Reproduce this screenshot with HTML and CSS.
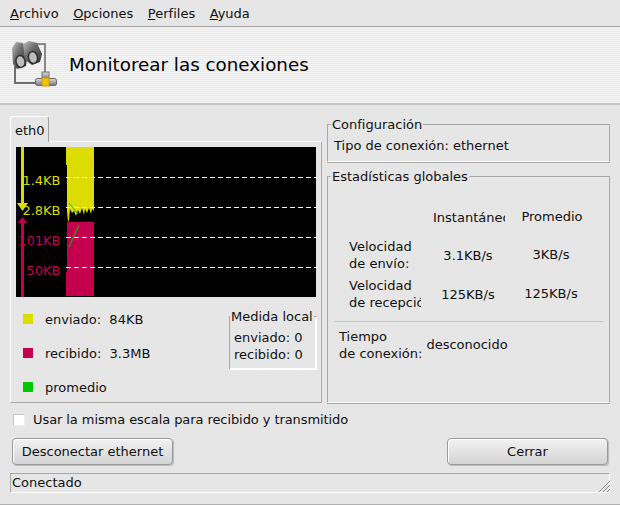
FILE: index.html
```html
<!DOCTYPE html>
<html lang="es">
<head>
<meta charset="utf-8">
<title>Monitorear las conexiones</title>
<link rel="stylesheet" href="styles.css">
</head>
<body>
<div class="window">
  <nav class="menubar">
    <span class="menu"><u>A</u>rchivo</span>
    <span class="menu"><u>O</u>pciones</span>
    <span class="menu"><u>P</u>erfiles</span>
    <span class="menu"><u>A</u>yuda</span>
  </nav>
  <header class="banner">
    <svg class="banner-icon" width="48" height="48" viewBox="0 0 48 48">
      <defs>
        <linearGradient id="barrel" x1="0" y1="0" x2="1" y2="1">
          <stop offset="0" stop-color="#c4c4c4"/><stop offset="0.4" stop-color="#6e6e6e"/><stop offset="1" stop-color="#2e2e2e"/>
        </linearGradient>
        <linearGradient id="pipe" x1="0" y1="0" x2="0" y2="1">
          <stop offset="0" stop-color="#ddd"/><stop offset="1" stop-color="#777"/>
        </linearGradient>
      </defs>
      <path d="M24 4H35V33" fill="none" stroke="#8a8a8a" stroke-width="2"/>
      <path d="M5 26V43H26" fill="none" stroke="#6e6e6e" stroke-width="2"/>
      <rect x="32" y="32" width="7" height="7" fill="url(#pipe)" stroke="#777" stroke-width="1"/>
      <rect x="25.500" y="38.500" width="21" height="7" rx="2" fill="url(#pipe)" stroke="#666" stroke-width="1"/>
      <rect x="32" y="38" width="7" height="8" fill="#f5c400" stroke="#c89a00" stroke-width="1"/>
      <path d="M2 8 6 2 13 3 17 18 16 26 7 29 3 24Z" fill="url(#barrel)"/>
      <path d="M13 4 19 1 27 3 32 14 30 22 22 25 15 20Z" fill="url(#barrel)"/>
      <ellipse cx="10.500" cy="21.500" rx="4.500" ry="6" fill="#bdbdbd" stroke="#2e2e2e" stroke-width="1.500" transform="rotate(-12 10.500 21.500)"/>
      <ellipse cx="23" cy="17.500" rx="4.500" ry="6" fill="#bdbdbd" stroke="#2e2e2e" stroke-width="1.500" transform="rotate(-12 23 17.500)"/>
    </svg>
    <h1 class="banner-title">Monitorear las conexiones</h1>
  </header>
  <main class="content">
    <section class="left">
      <div class="tab">eth0</div>
      <div class="panel">
        <svg class="graph" width="300" height="150" viewBox="0 0 300 150">
          <rect width="300" height="150" fill="#000"/>
          <path d="M50 0H78V18H78V64L76 62 75 67 73 61 71 66 69 62 68 68 66 61 64 67 62 63 60 69 58 64 56 66 54 62 53 73 52 75 51 64V18H50Z" fill="#dcdc00"/>
          <path d="M51 75H78V149H50V125H51Z" fill="#c4004e"/>
          <path d="M53 56 62 67M53 100 63 78" stroke="#00c800" stroke-width="1" fill="none"/>
          <g stroke="#fff" stroke-width="1" stroke-dasharray="5 3">
            <path d="M50 30.500H300"/><path d="M50 60.500H300"/><path d="M50 90.500H300"/><path d="M50 120.500H300"/>
          </g>
          <path d="M6.500 0V58" stroke="#dcdc00" stroke-width="3"/>
          <path d="M1 56H12L6.500 64Z" fill="#dcdc00"/>
          <path d="M6.500 74V150" stroke="#c4004e" stroke-width="3"/>
          <path d="M2 76H11L6.500 70Z" fill="#c4004e"/>
          <g class="graph-label">
            <text x="44.500" y="38" fill="#dcdc00" text-anchor="end">1.4KB</text>
            <text x="44.500" y="68" fill="#dcdc00" text-anchor="end">2.8KB</text>
            <text x="44.500" y="98" fill="#c4004e" text-anchor="end">101KB</text>
            <text x="44.500" y="128" fill="#c4004e" text-anchor="end">50KB</text>
          </g>
        </svg>
        <div class="under-graph">
          <div class="legend">
            <div class="legend-row"><i class="swatch sent"></i><span>enviado:&nbsp; 84KB</span></div>
            <div class="legend-row"><i class="swatch recv"></i><span>recibido:&nbsp; 3.3MB</span></div>
            <div class="legend-row"><i class="swatch avg"></i><span>promedio</span></div>
          </div>
          <fieldset class="box local">
            <legend>Medida local</legend>
            <div>enviado: 0</div>
            <div>recibido: 0</div>
          </fieldset>
        </div>
      </div>
    </section>
    <section class="right">
      <fieldset class="box config">
        <legend>Configuración</legend>
        <div>Tipo de conexión: ethernet</div>
      </fieldset>
      <fieldset class="box stats">
        <legend>Estadísticas globales</legend>
        <div class="stats-grid">
          <span></span>
          <span class="head clip">Instantáneo</span>
          <span class="head alt">Promedio</span>
          <span class="label">Velocidad<br>de envío:</span>
          <span class="val first">3.1KB/s</span>
          <span class="val alt">3KB/s</span>
          <span class="label">Velocidad<br>de recepción:</span>
          <span class="val first">125KB/s</span>
          <span class="val alt">125KB/s</span>
        </div>
        <hr class="sep">
        <div class="uptime">
          <span>Tiempo<br>de conexión:</span>
          <span>desconocido</span>
        </div>
      </fieldset>
    </section>
  </main>
  <label class="check"><span class="checkbox"></span>Usar la misma escala para recibido y transmitido</label>
  <div class="buttons">
    <button class="btn" type="button">Desconectar ethernet</button>
    <button class="btn" type="button">Cerrar</button>
  </div>
  <footer class="status">
    <span class="status-text">Conectado</span>
    <svg class="grip" width="12" height="12" viewBox="0 0 12 12"><path d="M1 12 12 1M5 12 12 5M9 12 12 9" stroke="#8c8c8c" fill="none"/></svg>
  </footer>
</div>
</body>
</html>
```
FILE: styles.css
```css
* { box-sizing: border-box; }
html, body { margin: 0; padding: 0; }
body { font-family: "DejaVu Sans", sans-serif; font-size: 13px; line-height: 17px; color: #111; background: #e6e6e6; }
.window { width: 620px; height: 505px; overflow: hidden; display: flex; flex-direction: column; border-bottom: 1px solid #b0b0b0; padding-bottom: 1px; }
.menubar { height: 27px; display: flex; align-items: center; gap: 14.5px; padding: 1px 10px 0; border-bottom: 1px solid #a8a8a8; }
.banner { height: 78px; display: flex; align-items: center; gap: 11px; padding: 0 0 0 10px; border-bottom: 2px solid #c4c4c4;
  background: repeating-linear-gradient(180deg, #e9e9e9 0, #e9e9e9 1px, #f6f6f6 1px, #f6f6f6 2px); }
.banner-icon { display: block; margin-top: -2px; }
.banner-title { margin: 0; font-size: 18.3px; font-weight: normal; line-height: 22px; color: #000; }
.content { display: flex; gap: 5px; padding: 11px 10px 0; height: 298px; }
.left { width: 312px; position: relative; }
.tab { width: 39px; height: 26px; padding: 5px 0 0 4px; margin-bottom: -1px; background: #e6e6e6; border: 1px solid #fff; border-right: 1px solid #a0a0a0; border-bottom: 0; border-radius: 3px 3px 0 0; position: relative; z-index: 1; }
.panel { height: 262px; padding: 5px; border: 1px solid; border-color: #fff #a8a8a8 #a8a8a8 #fff; }
.graph { display: block; }
.graph-label { font-size: 13px; }
.under-graph { display: flex; justify-content: space-between; padding: 0 0 0 7px; }
.legend { padding-top: 5px; }
.legend-row { display: flex; align-items: center; gap: 12px; height: 34px; }
.swatch { width: 10px; height: 10px; display: block; margin-top: -1px; }
.sent { background: #dcdc00; }
.recv { background: #c4004e; }
.avg { background: #00c800; }
.box { margin: 0; min-width: 0; border: 1px solid; border-color: #a8a8a8 #a8a8a8 #fff #a8a8a8; box-shadow: 0 1px 0 #a8a8a8; }
.box legend { padding: 0 1px; line-height: 15px; white-space: nowrap; }
.local { width: 88px; height: 61px; margin: 12px -1px 0 0; padding: 5px 0 0 4px; border-color: #a8a8a8 #fff #fff #a8a8a8; box-shadow: inset -1px -1px 0 #fff; white-space: nowrap; }
.local legend { margin-left: -4px; }
.right { width: 283px; display: flex; flex-direction: column; gap: 7px; padding-top: 1px; }
.config { height: 45px; padding: 5px 0 0 6px; }
.config legend { margin-left: -3px; }
.stats { height: 235px; padding: 0 6px; }
.stats legend { margin-left: -3px; }
.stats-grid { display: grid; grid-template-columns: 72px 84px 92px; margin-left: 15px; grid-template-rows: 36px 39px 39px; padding-top: 16px; box-sizing: content-box; }
.stats-grid span { white-space: nowrap; overflow: hidden; }
.head, .val { text-align: center; align-self: center; }
.head.clip { text-align: left; padding-left: 12px; }
.head.alt { padding-left: 2px; margin-top: -3px; }
.val.first { padding-left: 10px; }
.label { align-self: center; margin-top: -1px; }
.alt { margin-top: -2px; }
.sep { border: 0; height: 1px; background: #c8c8c8; margin: 7px 0 6px; }
.uptime { display: flex; gap: 4px; padding-left: 5px; align-items: center; }
.check { display: flex; align-items: center; gap: 8px; padding: 8px 0 0 13px; height: 25px; letter-spacing: -0.08px; }
.checkbox { width: 12px; height: 12px; background: #fff; border: 1px solid; border-color: #c4c4c4 #eee #eee #c4c4c4; display: block; }
.buttons { display: flex; justify-content: space-between; padding: 10px 12px 0; }
.btn { width: 161px; height: 27px; padding: 0; font: inherit; line-height: 17px; color: #111; border: 1px solid #9a9a9a; border-radius: 4px; background: linear-gradient(180deg, #f2f2f2, #d4d4d4); box-shadow: inset 1px 1px 0 #fff, 1px 1px 0 #bbb; }
.status { margin: 8px 10px 0; height: 20px; display: flex; justify-content: space-between; align-items: flex-end; padding-left: 1px; border: 1px solid; border-color: #a8a8a8 #fff #fff #a8a8a8; }
.status-text { margin-bottom: 1px; }
.grip { display: block; margin-right: -1px; }
```
